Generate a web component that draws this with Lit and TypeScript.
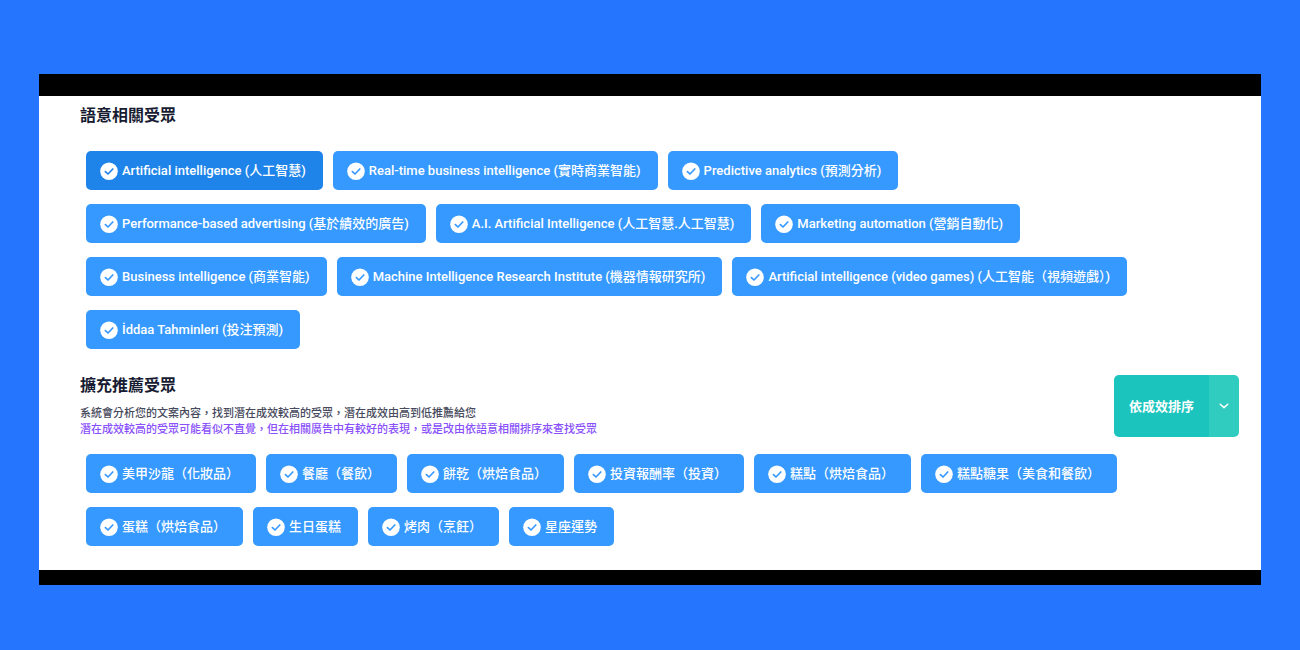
import { LitElement, html, css } from "lit";
import { customElement, property, state } from "lit/decorators.js";
import { classMap } from "lit/directives/class-map.js";

@customElement("audience-chip")
class AudienceChip extends LitElement {
  @property() label = "";
  @property({ type: Boolean }) active = false;

  static styles = css`
    :host { display: block; }
    .chip {
      display: flex;
      align-items: center;
      gap: 4px;
      height: 39px;
      padding: 0 17px 0 14px;
      border: 0;
      border-radius: 5px;
      background: #3699ff;
      color: #fff;
      font: 500 13px/20px Roboto, "Noto Sans CJK TC", sans-serif;
      white-space: nowrap;
      cursor: pointer;
    }
    .active { background: #1e84ea; }
    .icon { width: 18px; height: 18px; flex: none; }
  `;

  render() {
    return html`<button
      type="button"
      class=${classMap({ chip: true, active: this.active })}
      aria-pressed=${this.active ? "true" : "false"}
    >
      <svg class="icon" viewBox="0 0 18 18" aria-hidden="true">
        <circle cx="9" cy="9.2" r="8.8" fill="#fff" />
        <path d="M5.4 9.6 8 12 12.8 7" fill="none" stroke=${this.active ? "#1e84ea" : "#3699ff"} stroke-width="1.7" stroke-linecap="round" stroke-linejoin="round" />
      </svg>
      <span>${this.label}</span>
    </button>`;
  }
}

@customElement("app-root")
class AppRoot extends LitElement {
  @state() private selected = "Artificial intelligence (人工智慧)";

  private semantic = [
    "Artificial intelligence (人工智慧)",
    "Real-time business intelligence (實時商業智能)",
    "Predictive analytics (預測分析)",
    "Performance-based advertising (基於績效的廣告)",
    "A.I. Artificial Intelligence (人工智慧.人工智慧)",
    "Marketing automation (營銷自動化)",
    "Business intelligence (商業智能)",
    "Machine Intelligence Research Institute (機器情報研究所)",
    "Artificial intelligence (video games) (人工智能（視頻遊戲）)",
    "İddaa Tahminleri (投注預測)",
  ];

  private extended = [
    "美甲沙龍（化妝品）",
    "餐廳（餐飲）",
    "餅乾（烘焙食品）",
    "投資報酬率（投資）",
    "糕點（烘焙食品）",
    "糕點糖果（美食和餐飲）",
    "蛋糕（烘焙食品）",
    "生日蛋糕",
    "烤肉（烹飪）",
    "星座運勢",
  ];

  static styles = css`
    :host {
      display: block;
      box-sizing: border-box;
      min-height: 100vh;
      padding: 74px 39px 65px;
      background: #2575ff;
      font-family: "Noto Sans CJK TC", sans-serif;
    }
    .card {
      border-top: 22px solid #000;
      border-bottom: 15px solid #000;
      background: #fff;
      padding: 6px 22px 24px 41px;
    }
    .title {
      margin: 0;
      color: #181c32;
      font-size: 16px;
      font-weight: 700;
      line-height: 24px;
    }
    .chips {
      display: flex;
      flex-wrap: wrap;
      gap: 14px 10px;
      margin: 25px 0 23px;
      padding: 0 60px 0 6px;
      list-style: none;
    }
    .chips.extended { margin: 17px 0 0; }
    .head {
      display: flex;
      justify-content: space-between;
      align-items: flex-end;
    }
    .intro { padding-bottom: 1px; }
    .note {
      margin: 0;
      color: #474a5c;
      font-size: 11px;
      font-weight: 500;
      line-height: 16px;
    }
    .title + .note { margin-top: 8px; }
    .note.hint { color: #8950fc; }
    .sort {
      display: flex;
      height: 62px;
      border-radius: 5px;
      overflow: hidden;
    }
    .sort button {
      border: 0;
      padding: 0;
      color: #fff;
      background: #1bc5bd;
      font: 700 13px/20px "Noto Sans CJK TC", sans-serif;
      cursor: pointer;
    }
    .sort .label { padding: 0 15px; }
    .sort .toggle {
      display: flex;
      align-items: center;
      justify-content: center;
      width: 30px;
      background: #31ccc0;
    }
  `;

  private chips(list: string[]) {
    return list.map(
      (label) => html`<li>
        <audience-chip .label=${label} .active=${label === this.selected} @click=${() => (this.selected = label)}></audience-chip>
      </li>`
    );
  }

  render() {
    return html`
      <main class="card">
        <section>
          <h2 class="title">語意相關受眾</h2>
          <ul class="chips">${this.chips(this.semantic)}</ul>
        </section>
        <section>
          <div class="head">
            <div class="intro">
              <h2 class="title">擴充推薦受眾</h2>
              <p class="note">系統會分析您的文案內容，找到潛在成效較高的受眾，潛在成效由高到低推薦給您</p>
              <p class="note hint">潛在成效較高的受眾可能看似不直覺，但在相關廣告中有較好的表現，或是改由依語意相關排序來查找受眾</p>
            </div>
            <div class="sort">
              <button type="button" class="label">依成效排序</button>
              <button type="button" class="toggle" aria-label="排序選項">
                <svg width="10" height="6" viewBox="0 0 10 6" aria-hidden="true">
                  <path d="M1.2 1.2 5 4.6 8.8 1.2" fill="none" stroke="#fff" stroke-width="1.5" stroke-linecap="round" stroke-linejoin="round" />
                </svg>
              </button>
            </div>
          </div>
          <ul class="chips extended">${this.chips(this.extended)}</ul>
        </section>
      </main>
    `;
  }
}
